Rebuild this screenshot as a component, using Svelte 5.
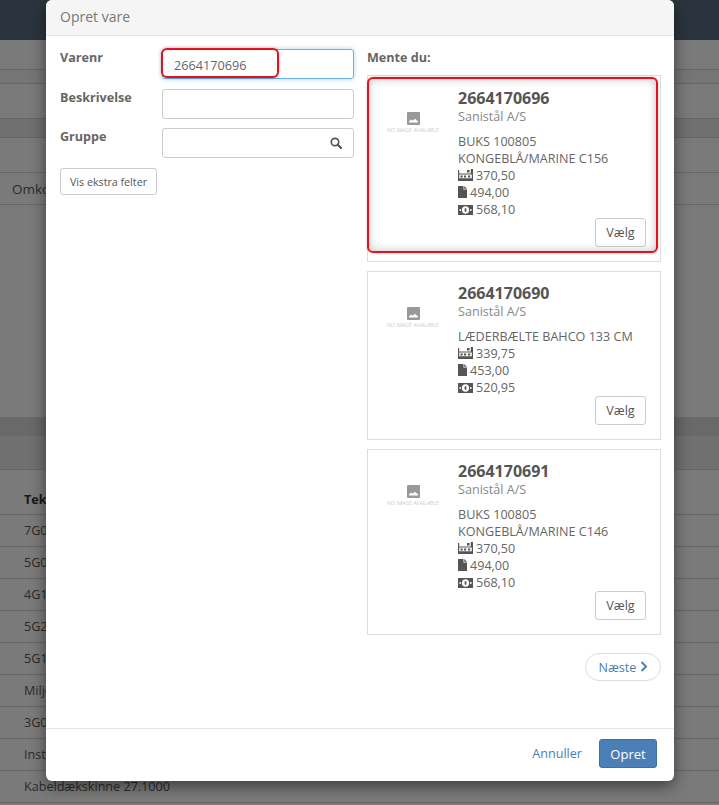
<script>
  const bgTop = [
    { h: 30, cls: '' },
    { h: 14, cls: 'tint' },
    { h: 35, cls: '' },
    { h: 19, cls: 'dark' },
    { h: 35, cls: '' },
    { h: 32, cls: 'omk', text: 'Omkost' },
    { h: 212, cls: 'noline' },
    { h: 19, cls: 'darker noline' },
    { h: 34, cls: 'dark' },
  ];
  const bgRows = ['7G0', '5G0', '4G1', '5G2', '5G1', 'Miljø', '3G0', 'Inst', 'Kabeldækskinne 27.1000'];
  const cards = [
    { nr: '2664170696', lines: ['BUKS 100805', 'KONGEBLÅ/MARINE C156'], a: '370,50', b: '494,00', c: '568,10', cls: 'tall' },
    { nr: '2664170690', lines: ['LÆDERBÆLTE BAHCO 133 CM'], a: '339,75', b: '453,00', c: '520,95', cls: 'short' },
    { nr: '2664170691', lines: ['BUKS 100805', 'KONGEBLÅ/MARINE C146'], a: '370,50', b: '494,00', c: '568,10', cls: 'mid' },
  ];
</script>

<div class="page">
  <div class="navbar"></div>
  {#each bgTop as row}
    <div class="bg-row {row.cls}" style:height={`${row.h}px`}>{row.text ?? ''}</div>
  {/each}
  <div class="bg-th">Tekst</div>
  {#each bgRows as r}
    <div class="bg-td">{r}</div>
  {/each}
  <div class="backdrop"></div>

  <div class="modal">
    <div class="modal-head">Opret vare</div>
    <div class="modal-body">
      <div class="form">
        <div class="field">
          <span class="label">Varenr</span>
          <div class="input focus">
            2664170696
            <div class="mark"></div>
          </div>
        </div>
        <div class="field">
          <span class="label">Beskrivelse</span>
          <div class="input"></div>
        </div>
        <div class="field">
          <span class="label">Gruppe</span>
          <div class="input search">
            <svg width="12" height="12" viewBox="0 0 12 12">
              <circle cx="5" cy="5" r="3.7" fill="none" stroke="#555" stroke-width="1.7" />
              <path d="M7.8 7.8 L11 11" stroke="#555" stroke-width="2.2" stroke-linecap="round" />
            </svg>
          </div>
        </div>
        <button class="btn small">Vis ekstra felter</button>
      </div>

      <div class="results">
        <div class="results-title">Mente du:</div>
        {#each cards as card, i}
          <div class="card {card.cls}">
            {#if i === 0}<div class="card-mark"></div>{/if}
            <div class="noimg">
              <svg width="13" height="13" viewBox="0 0 13 13">
                <rect width="13" height="13" rx="1" fill="#999" />
                <path d="M2 10.5 V9.5 L4 7.5 L5.5 8.8 L8 6.8 L11 9.5 V10.5 Z" fill="#fff" />
              </svg>
              <span>NO IMAGE AVAILABLE</span>
            </div>
            <div class="info">
              <div class="nr">{card.nr}</div>
              <div class="sup">Sanistål A/S</div>
              {#each card.lines as l}
                <div class="line">{l}</div>
              {/each}
              <div class="line">
                <svg class="ic" width="15" height="12" viewBox="0 0 15 12">
                  <path d="M0 1h1.2v3.4h11.6V0h1.2l1 0v12H0z M1.2 5.6v3.6h12.6V5.6z" fill="#555" fill-rule="evenodd" />
                  <rect x="9" y="1" width="2.5" height="2.5" fill="#555" />
                  <rect x="2.5" y="6.5" width="2.2" height="2" fill="#555" />
                  <rect x="6" y="6.5" width="2.2" height="2" fill="#555" />
                  <rect x="10" y="6.5" width="2.2" height="2" fill="#555" />
                </svg>{card.a}
              </div>
              <div class="line">
                <svg class="ic" width="9" height="12" viewBox="0 0 9 12">
                  <path d="M0 0h5.5v3.5H9V12H0z M6.2 0 L9 2.8 H6.2z" fill="#555" />
                </svg>{card.b}
              </div>
              <div class="line">
                <svg class="ic" width="15" height="10" viewBox="0 0 15 10">
                  <rect width="15" height="10" fill="#555" />
                  <ellipse cx="7.5" cy="5" rx="3.6" ry="3.8" fill="#fff" />
                  <ellipse cx="7.5" cy="5" rx="1" ry="2" fill="#555" />
                  <circle cx="2.2" cy="5" r="0.9" fill="#fff" />
                  <circle cx="12.8" cy="5" r="0.9" fill="#fff" />
                </svg>{card.c}
              </div>
            </div>
            <button class="btn pick">Vælg</button>
          </div>
        {/each}
        <div class="pager">
          <button class="next">Næste
            <svg width="8" height="11" viewBox="0 0 8 11">
              <path d="M1.5 1 L6 5.5 L1.5 10" fill="none" stroke="#4a7fb8" stroke-width="2" />
            </svg>
          </button>
        </div>
      </div>
    </div>
    <div class="modal-foot">
      <span class="cancel">Annuller</span>
      <button class="btn primary">Opret</button>
    </div>
  </div>
</div>

<style>
  :global(body) {
    margin: 0;
    font-family: "Open Sans", sans-serif;
  }

  .page {
    position: relative;
    width: 719px;
    height: 805px;
    overflow: hidden;
    background: #f5f5f5;
    font-size: 12.6px;
    color: #666;
  }

  .navbar {
    height: 40px;
    background: #56687a;
  }

  .bg-row {
    box-sizing: border-box;
    border-bottom: 1px solid #ccc;
    color: #555;
  }
  .omk {
    padding: 6px 12px;
    font-size: 13.5px;
    line-height: 20px;
  }
  .tint { background: #ebebeb; }
  .dark { background: #e0e0e0; }
  .darker { background: #d2d2d2; }
  .noline { border-bottom: 0; }

  .bg-th {
    height: 45px;
    box-sizing: border-box;
    padding: 21px 24px 0;
    font-size: 12.6px;
    font-weight: 700;
    color: #333;
    border-bottom: 1px solid #ccc;
  }

  .bg-td {
    height: 32px;
    box-sizing: border-box;
    padding: 6px 24px;
    border-bottom: 1px solid #ccc;
    font-size: 12.6px;
    line-height: 20px;
    color: #555;
  }

  .backdrop {
    position: absolute;
    inset: 0;
    background: rgba(0, 0, 0, 0.5);
  }

  .modal {
    position: absolute;
    left: 46px;
    top: 0;
    width: 628px;
    height: 781px;
    background: #fff;
    border-radius: 6px;
    box-shadow: 0 5px 15px rgba(0, 0, 0, 0.5);
    display: flex;
    flex-direction: column;
  }

  .modal-head {
    height: 36px;
    padding: 7px 14px 0;
    box-sizing: border-box;
    background: #f5f5f5;
    border-bottom: 1px solid #e5e5e5;
    font-size: 14px;
    color: #777;
    border-radius: 6px 6px 0 0;
  }

  .modal-body {
    flex: 1;
    display: flex;
    gap: 13px;
    padding: 12px 13px 0 14px;
  }

  .form {
    width: 294px;
  }

  .field {
    display: flex;
    height: 39.5px;
  }

  .label {
    width: 102px;
    padding-top: 1px;
    font-weight: 700;
    line-height: 18px;
  }

  .input {
    position: relative;
    width: 192px;
    height: 30px;
    margin-top: 1px;
    box-sizing: border-box;
    border: 1px solid #ccc;
    border-radius: 3px;
    padding: 6px 11px;
    line-height: 18px;
    font-size: 12.7px;
  }

  .input.focus {
    border-color: #66afe9;
    box-shadow: 0 0 5px rgba(102, 175, 233, 0.5);
  }

  .search {
    display: flex;
    align-items: center;
    justify-content: flex-end;
  }

  .mark {
    position: absolute;
    left: -2px;
    top: -2px;
    width: 118px;
    height: 30px;
    box-sizing: border-box;
    border: 2px solid #e8101a;
    border-radius: 6px;
    box-shadow: 0 0 3px rgba(0, 0, 0, 0.25);
  }

  .btn {
    font-family: inherit;
    background: #fff;
    border: 1px solid #ccc;
    border-radius: 3px;
    color: #555;
    font-size: 12.6px;
  }

  .small {
    display: block;
    height: 27px;
    width: 97px;
    padding: 0;
    font-size: 10.7px;
    margin-top: 1.5px;
  }

  .results {
    width: 294px;
  }

  .results-title {
    padding-top: 1px;
    font-weight: 700;
    line-height: 18px;
    margin-bottom: 8px;
  }

  .card {
    position: relative;
    box-sizing: border-box;
    display: flex;
    align-items: flex-start;
    border: 1px solid #ddd;
    margin-bottom: 9px;
    padding-top: 12px;
  }

  .tall { height: 187px; padding-top: 13px; }
  .short { height: 169px; }
  .mid { height: 186px; }

  .card-mark {
    position: absolute;
    left: -1px;
    top: 1px;
    width: 291px;
    height: 176px;
    box-sizing: border-box;
    border: 2px solid #e8101a;
    border-radius: 6px;
    box-shadow: inset 0 0 8px rgba(0, 0, 0, 0.25), 0 0 3px rgba(0, 0, 0, 0.2);
    pointer-events: none;
  }

  .noimg {
    flex: none;
    width: 90px;
    box-sizing: border-box;
    padding: 23px 17px 0 17px;
    display: flex;
    flex-direction: column;
    align-items: center;
    gap: 2px;
  }

  .noimg span {
    font-size: 5.3px;
    font-weight: 300;
    white-space: nowrap;
    color: #aaa;
    line-height: 7px;
  }

  .info {
    flex: 1;
    width: 0;
  }

  .nr {
    font-size: 16px;
    font-weight: 700;
    line-height: 19px;
    color: #555;
  }

  .sup {
    color: #888;
    line-height: 18px;
    margin-bottom: 7px;
  }

  .line {
    line-height: 17px;
    white-space: nowrap;
  }

  .ic {
    margin-right: 3px;
    vertical-align: -1px;
  }

  .pick {
    flex: none;
    align-self: flex-end;
    margin: 0 14px 14px 0;
    width: 51px;
    height: 29px;
  }

  .pager {
    display: flex;
    justify-content: flex-end;
    margin-top: 18px;
  }

  .next {
    height: 28px;
    width: 76px;
    background: #fff;
    border: 1px solid #ddd;
    border-radius: 14px;
    color: #4a7fb8;
    font-family: inherit;
    font-size: 12.6px;
    padding: 0;
  }

  .modal-foot {
    height: 53px;
    box-sizing: border-box;
    border-top: 1px solid #e5e5e5;
    display: flex;
    align-items: center;
    justify-content: flex-end;
    gap: 17px;
    padding: 0 17px 3px 0;
  }

  .cancel {
    color: #4a7fb8;
  }

  .primary {
    width: 58px;
    height: 29px;
    background: #4a7fb8;
    border-color: #3f6fa3;
    color: #fff;
    font-size: 13px;
  }
</style>
